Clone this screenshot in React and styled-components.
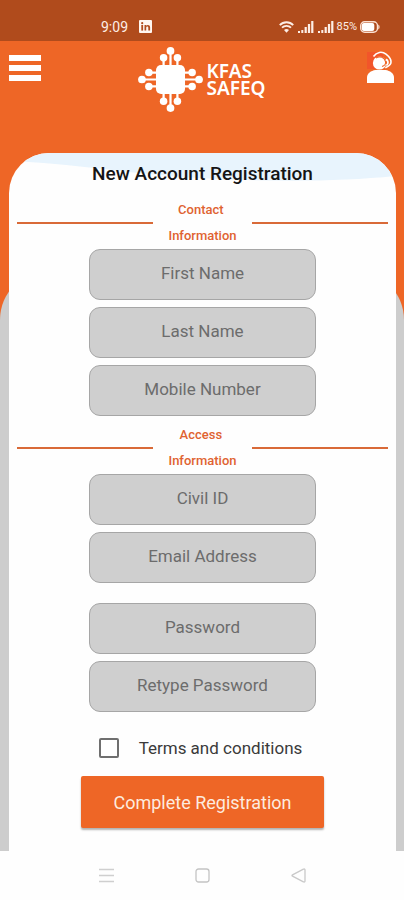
import React, { useState } from 'react'
import styled, { createGlobalStyle } from 'styled-components'

const GlobalStyle = createGlobalStyle`
    * {
        box-sizing: border-box;
    }
    body {
        margin: 0;
        background: #fefefe;
        font-family: Roboto, "Liberation Sans", sans-serif;
    }
`

const Screen = styled.div`
    display: flex;
    flex-direction: column;
    min-height: 100vh;
    background: #ee6626;
`

const StatusBar = styled.div`
    display: flex;
    align-items: center;
    height: 41px;
    padding: 12px 24px 0 101px;
    background: #b04b1c;
    color: #fdeee6;
`

const StatusGroup = styled.div`
    display: flex;
    align-items: center;
    gap: ${props => props.gap || '4px'};
    margin-left: ${props => props.push ? 'auto' : '0'};
`

const Clock = styled.time`
    font-size: 14px;
`

const BatteryLevel = styled.span`
    margin: 0 -1px;
    font-size: 11px;
`

const Header = styled.header`
    display: flex;
    align-items: flex-start;
    justify-content: space-between;
    height: 112px;
    padding: 6px 9px 6px 8px;
`

const IconButton = styled.button`
    display: flex;
    justify-content: ${props => props.align || 'flex-start'};
    width: 36px;
    padding: ${props => props.top || '0'} 0 0;
    border: 0;
    background: none;
    cursor: pointer;
`

const Logo = styled.a`
    display: flex;
    align-items: center;
    gap: 4px;
    color: #fff;
    text-decoration: none;
`

const LogoText = styled.span`
    width: min-content;
    font-family: "Noto Sans", sans-serif;
    font-size: 19px;
    font-weight: 600;
    line-height: 17px;
`

const Main = styled.main`
    position: relative;
    flex: 1;
    display: flex;
    padding: 0 8px 0 9px;
    &:before {
        content: "";
        position: absolute;
        top: 117px;
        right: 0;
        bottom: 0;
        left: 0;
        border-radius: 50px 50px 0 0;
        background: #cdcdcd;
    }
`

const Card = styled.form`
    position: relative;
    flex: 1;
    display: flex;
    flex-direction: column;
    align-items: center;
    padding: 8px 8px 20px;
    border-radius: 40px 40px 0 0;
    background: #fefefe;
    overflow: hidden;
`

const Wave = styled.svg`
    position: absolute;
    top: 0;
    left: 0;
    width: 100%;
    height: 30px;
`

const Title = styled.h1`
    position: relative;
    margin: 0 0 10px;
    color: #151515;
    font-size: 19px;
    font-weight: 500;
    line-height: 26px;
`

const SectionTitle = styled.h2`
    display: flex;
    align-items: center;
    align-self: stretch;
    margin: 0;
    color: #e06331;
    font-size: 13px;
    font-weight: 500;
    line-height: 26px;
    text-align: center;
    &:before, &:after {
        content: "";
        flex: 1;
        height: 2px;
        background: #d96a38;
    }
`

const SectionLabel = styled.span`
    width: 99px;
    padding: 0 12px;
`

const Fields = styled.div`
    display: flex;
    flex-direction: column;
    gap: 7px;
    width: 61%;
    margin-bottom: ${props => props.space || '6px'};
`

const Input = styled.input`
    width: 100%;
    height: 51px;
    padding: 0 12px 4px;
    border: 1px solid #a6a6a6;
    border-radius: 11px;
    background: #cfcfcf;
    color: #333;
    font-family: inherit;
    font-size: 17px;
    text-align: center;
    &::placeholder {
        color: #6c6c6c;
        opacity: 1;
    }
`

const Terms = styled.label`
    display: flex;
    align-items: center;
    gap: 20px;
    width: 56%;
    margin-bottom: 16px;
    color: #3a3a3a;
    font-size: 17px;
    line-height: 24px;
    white-space: nowrap;
`

const Checkbox = styled.input`
    appearance: none;
    flex: none;
    width: 20px;
    height: 20px;
    margin: 0;
    border: 2px solid #6f6f6f;
    border-radius: 2px;
    background: #fff;
    &:checked {
        background: #ee6626;
    }
`

const Submit = styled.button`
    width: 243px;
    height: 52px;
    border: 0;
    border-radius: 2px;
    background: #ee6626;
    box-shadow: 0 2px 2px rgba(0, 0, 0, 0.3);
    color: #fdebdf;
    font-family: inherit;
    font-size: 18px;
    cursor: pointer;
`

const NavBar = styled.nav`
    display: flex;
    align-items: center;
    justify-content: space-around;
    height: 49px;
    padding: 0 58px;
    background: #fefefe;
`

const NavButton = styled.button`
    display: flex;
    padding: 0;
    border: 0;
    background: none;
`

const LinkedinIcon = () => (
    <svg width="13" height="13" viewBox="0 0 13 13">
        <rect width="13" height="13" rx="1" fill="#fff6f0" />
        <g fill="#b04b1c">
            <circle cx="3.2" cy="3.2" r="1.1" />
            <rect x="2.3" y="5" width="1.8" height="5.6" />
            <path d="M5.5 5h1.7v.8c.9-1.4 3.9-1.2 3.9 1.4v3.4H9.3V7.700c0-1.600-2.100-1.500-2.100 0v2.900H5.500z" />
        </g>
    </svg>
)

const WifiIcon = () => (
    <svg width="15" height="12" viewBox="0 0 15 12" fill="none" stroke="#fdeee6" strokeWidth="1.9">
        <path d="M.8 4.200C4.500.2 10.500.2 14.200 4.200" />
        <path d="M3 6.700c2.500-2.500 6.500-2.500 9 0" />
        <path d="M5 9c1.500-1.400 3.500-1.400 5 0L7.500 11.800z" fill="#fdeee6" stroke="none" />
    </svg>
)

const SignalIcon = () => (
    <svg width="16" height="12" viewBox="0 0 16 12" fill="#fdeee6">
        <rect x="0" y="10" width="2" height="2" />
        <rect x="3.300" y="9" width="2" height="3" />
        <rect x="6.600" y="6" width="2.200" height="6" />
        <rect x="9.900" y="3" width="2.200" height="9" />
        <rect x="13.200" y="0" width="2.200" height="12" />
    </svg>
)

const BatteryIcon = () => (
    <svg width="20" height="12" viewBox="0 0 20 12">
        <rect x=".7" y=".7" width="16.800" height="10.600" rx="4" fill="none" stroke="#fbe0d2" strokeWidth="1.400" />
        <rect x="1.800" y="2" width="12.500" height="8" rx="2" fill="#fff" />
        <path d="M18.300 3.500c1.700.8 1.700 4.200 0 5z" fill="#fbe0d2" />
    </svg>
)

const MenuIcon = () => (
    <svg width="34" height="27" viewBox="0 0 34 27" fill="#fff">
        <rect x="1" y="0" width="32" height="6" />
        <rect x="1" y="10" width="32" height="6" />
        <rect x="1" y="20" width="32" height="6" />
    </svg>
)

// one side of the chip, drawn pointing up and rotated around the centre
const ChipPins = ({ angle }) => (
    <g transform={`rotate(${angle} 32 32)`}>
        <path d="M32 20V4M25.200 20V10.500M38.800 20V10.500" stroke="#fff" strokeWidth="2.200" />
        <circle cx="32" cy="3.900" r="3.800" />
        <circle cx="25.200" cy="10.700" r="3.700" />
        <circle cx="38.800" cy="10.700" r="3.700" />
    </g>
)

const ChipIcon = () => (
    <svg width="65" height="65" viewBox="0 0 64 64" fill="#fff">
        <rect x="17.700" y="17.700" width="28.600" height="28.600" rx="5" />
        {[0, 90, 180, 270].map(angle => <ChipPins key={angle} angle={angle} />)}
    </svg>
)

const SupportIcon = () => (
    <svg width="29" height="33" viewBox="0 0 29 33" fill="#fff">
        <rect x="1" y="1" width="16" height="17" fill="#f2552a" />
        <path d="M1 32v-5.500c0-4.200 4-6.800 8.500-7.500h10c4.500.7 8.500 3.300 8.500 7.500V32z" />
        <circle cx="13.500" cy="12" r="6.600" />
        <path d="M7.500 5.500C10.500 1 16 0 20 3.200c3.500 2.800 5.500 6.500 4.800 9-.6 2-3 3.300-5.500 4.500" fill="none" stroke="#fff" strokeWidth="1.600" />
        <path d="M10 7c4-2.500 8.500-.5 9.500 3.500.5 2.500-1 4.500-3.500 5" fill="none" stroke="#ee6626" strokeWidth="1.100" />
        <path d="M19.800 8.500c2.500.5 3 4.500.6 6" fill="none" stroke="#fff" strokeWidth="1.800" />
    </svg>
)

const RecentsIcon = () => (
    <svg width="15" height="15" viewBox="0 0 15 15" stroke="#cfcfcf" strokeWidth="1.300">
        <path d="M0 1.500h15M0 7.500h15M0 13.500h15" />
    </svg>
)

const HomeIcon = () => (
    <svg width="15" height="15" viewBox="0 0 15 15" fill="none" stroke="#c4c4c4" strokeWidth="1.300">
        <rect x="1" y="1" width="13" height="13" rx="2.500" />
    </svg>
)

const BackIcon = () => (
    <svg width="15" height="15" viewBox="0 0 15 15" fill="none" stroke="#c9c9c9" strokeWidth="1.300" strokeLinejoin="round">
        <path d="M14 2v11c0 1-.8 1.300-1.600.8L1.500 8.200c-.7-.4-.7-1 0-1.400L12.400 1.200C13.200.7 14 1 14 2z" />
    </svg>
)

const contactFields = [
    { name: 'firstName', label: 'First Name', type: 'text' },
    { name: 'lastName', label: 'Last Name', type: 'text' },
    { name: 'mobile', label: 'Mobile Number', type: 'tel' },
]

const accessFields = [
    { name: 'civilId', label: 'Civil ID', type: 'text' },
    { name: 'email', label: 'Email Address', type: 'email' },
]

const passwordFields = [
    { name: 'password', label: 'Password', type: 'password' },
    { name: 'retypePassword', label: 'Retype Password', type: 'password' },
]

const FieldGroup = ({ fields, values, change, space }) => (
    <Fields space={space}>
        {fields.map(({ name, label, type }) => (
            <Input
                key={name}
                id={name}
                name={name}
                type={type}
                placeholder={label}
                aria-label={label}
                value={values[name] || ''}
                onChange={change}
            />
        ))}
    </Fields>
)

const App = () => {
    const [values, setValues] = useState({})
    const [accepted, setAccepted] = useState(false)

    const change = e => setValues({ ...values, [e.target.name]: e.target.value })

    return (
        <Screen>
            <GlobalStyle />

            <StatusBar>
                <StatusGroup gap="11px">
                    <Clock>9:09</Clock>
                    <LinkedinIcon />
                </StatusGroup>
                <StatusGroup push="true">
                    <WifiIcon />
                    <SignalIcon />
                    <SignalIcon />
                    <BatteryLevel>85%</BatteryLevel>
                    <BatteryIcon />
                </StatusGroup>
            </StatusBar>

            <Header>
                <IconButton type="button" aria-label="Menu" top="8px">
                    <MenuIcon />
                </IconButton>
                <Logo href="#" aria-label="KFAS SAFEQ">
                    <ChipIcon />
                    <LogoText>KFAS SAFEQ</LogoText>
                </Logo>
                <IconButton type="button" aria-label="Support" align="flex-end" top="4px">
                    <SupportIcon />
                </IconButton>
            </Header>

            <Main>
                <Card onSubmit={e => e.preventDefault()}>
                    <Wave viewBox="0 0 387 30" preserveAspectRatio="none">
                        <path d="M0 8C60 10 120 21 190 25C260 29 330 29 387 23V0H0z" fill="#e8f4fd" />
                    </Wave>
                    <Title>New Account Registration</Title>

                    <SectionTitle><SectionLabel>Contact&nbsp; Information</SectionLabel></SectionTitle>
                    <FieldGroup fields={contactFields} values={values} change={change} />

                    <SectionTitle><SectionLabel>Access&nbsp; Information</SectionLabel></SectionTitle>
                    <FieldGroup fields={accessFields} values={values} change={change} space="20px" />
                    <FieldGroup fields={passwordFields} values={values} change={change} space="24px" />

                    <Terms htmlFor="terms">
                        <Checkbox
                            id="terms"
                            type="checkbox"
                            checked={accepted}
                            onChange={e => setAccepted(e.target.checked)}
                        />
                        Terms and conditions
                    </Terms>

                    <Submit type="submit">Complete Registration</Submit>
                </Card>
            </Main>

            <NavBar>
                <NavButton type="button" aria-label="Recent apps"><RecentsIcon /></NavButton>
                <NavButton type="button" aria-label="Home"><HomeIcon /></NavButton>
                <NavButton type="button" aria-label="Back"><BackIcon /></NavButton>
            </NavBar>
        </Screen>
    )
}

export default App
